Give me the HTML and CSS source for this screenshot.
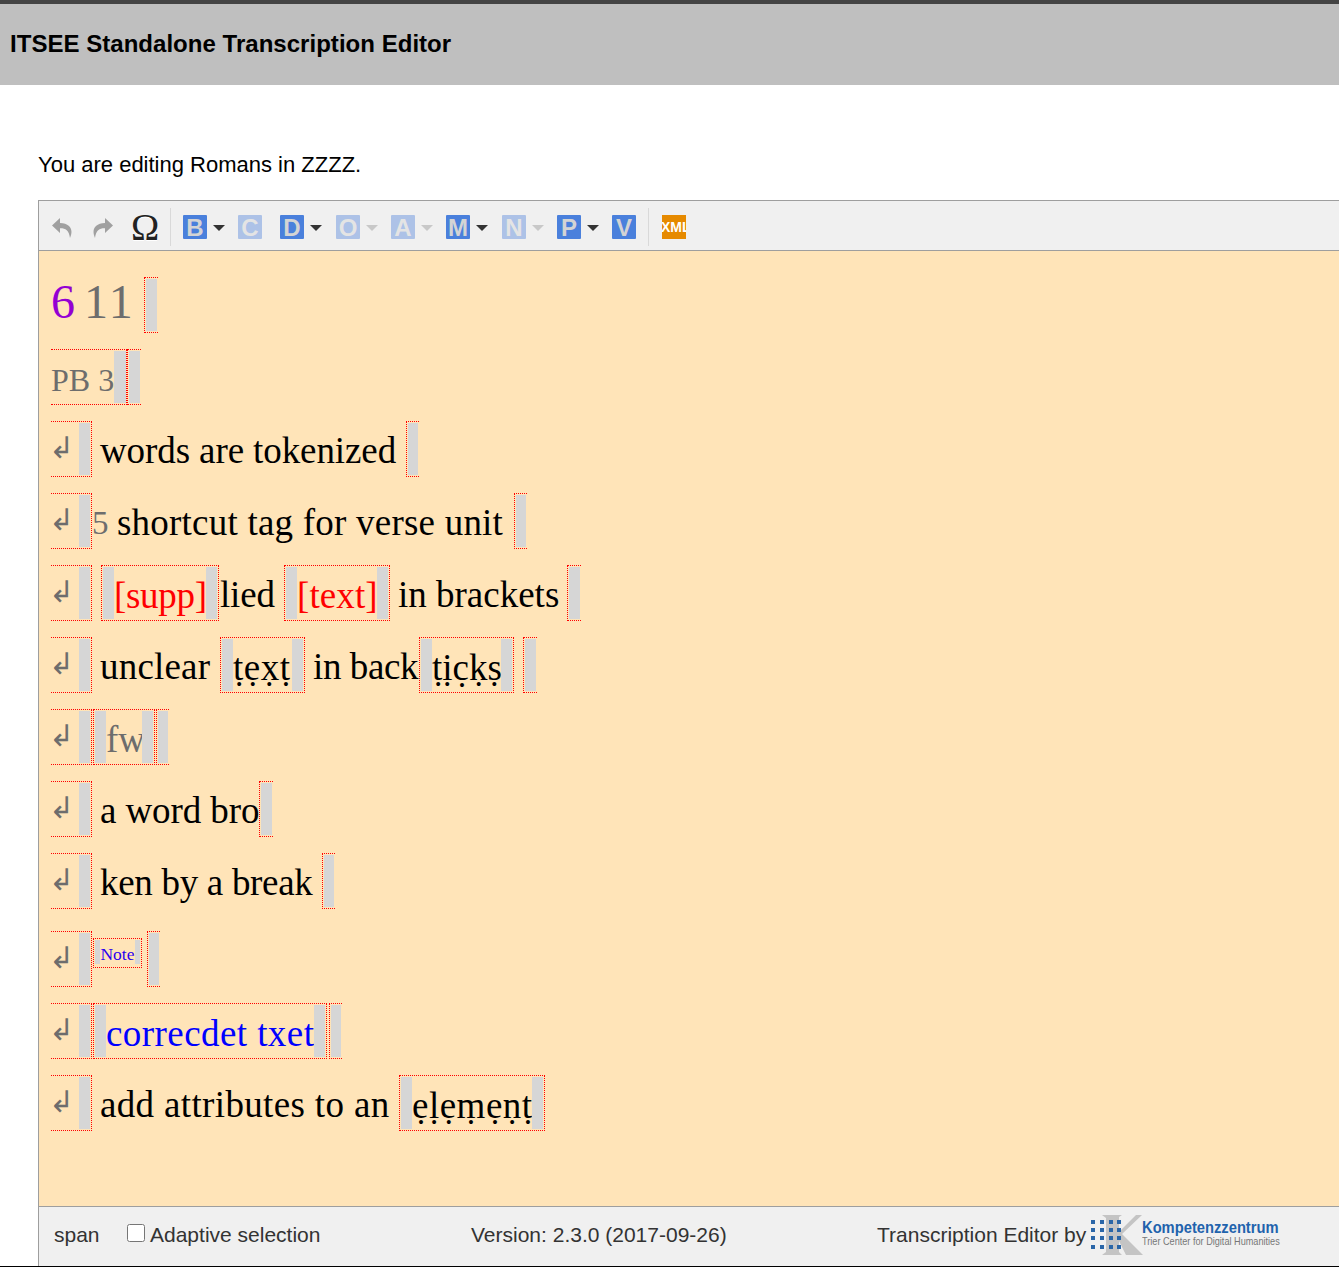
FILE: index.html
```html
<!DOCTYPE html>
<html lang="en">
<head>
<meta charset="utf-8">
<title>ITSEE Standalone Transcription Editor</title>
<link rel="stylesheet" href="styles.css">
</head>
<body>
<header class="page-header"><h1>ITSEE Standalone Transcription Editor</h1></header>
<p class="intro">You are editing Romans in ZZZZ.</p>
<section class="editor">
  <div class="toolbar">
    <svg class="history" viewBox="0 0 22 24"><path d="M9 3 L1 10.5 L9 18 L9 13.2 C14 13 18 14.8 19 23 C22.5 15 20 8.5 9 8 Z"/></svg>
    <svg class="history redo" viewBox="0 0 22 24"><path d="M13 3 L21 10.5 L13 18 L13 13.2 C8 13 4 14.8 3 23 C-.5 15 2 8.5 13 8 Z"/></svg>
    <span class="omega">Ω</span>
    <i class="sep"></i>
    <span class="btn">B</span><i class="caret"></i>
    <span class="btn off gap18">C</span>
    <span class="btn">D</span><i class="caret wide"></i>
    <span class="btn off">O</span><i class="caret off"></i>
    <span class="btn off">A</span><i class="caret off"></i>
    <span class="btn">M</span><i class="caret wide"></i>
    <span class="btn off">N</span><i class="caret off"></i>
    <span class="btn">P</span><i class="caret"></i>
    <span class="btn gap12">V</span>
    <i class="sep sep-xml"></i>
    <span class="xml"><span>XML</span></span>
  </div>
  <div class="content">
    <div class="row">
      <span class="title"><span class="purple">6</span> <span class="grey">11</span></span>
      <span class="seg tb l ml10"><i class="cap"></i></span>
    </div>
    <div class="row">
      <span class="seg tb r pb"><span class="grey small">PB 3</span><i class="cap"></i></span>
      <span class="seg tb l"><i class="cap"></i></span>
    </div>
    <div class="row">
      <span class="seg tb r brk"><span class="arrow">↲</span><i class="cap"></i></span>
      <span class="txt ml9 t-words">words are tokenized</span>
      <span class="seg tb l ml10 narrow"><i class="cap"></i></span>
    </div>
    <div class="row">
      <span class="seg tb r brk"><span class="arrow">↲</span><i class="cap"></i></span>
      <span class="txt grey t-five">5</span>
      <span class="txt ml9 t-shortcut">shortcut tag for verse unit</span>
      <span class="seg tb l ml10 narrow"><i class="cap"></i></span>
    </div>
    <div class="row">
      <span class="seg tb r brk"><span class="arrow">↲</span><i class="cap"></i></span>
      <span class="seg all ml9"><i class="cap"></i><span class="txt red t-supp">[supp]</span><i class="cap"></i></span>
      <span class="txt ml2 t-lied">lied</span>
      <span class="seg all ml10"><i class="cap"></i><span class="txt red t-text">[text]</span><i class="cap"></i></span>
      <span class="txt ml8 t-brackets">in brackets</span>
      <span class="seg tb l ml9"><i class="cap"></i></span>
    </div>
    <div class="row">
      <span class="seg tb r brk"><span class="arrow">↲</span><i class="cap"></i></span>
      <span class="txt ml9 t-unclear">unclear</span>
      <span class="seg all ml9"><i class="cap"></i><span class="txt t-dot1">ṭẹx̣ṭ</span><i class="cap"></i></span>
      <span class="txt ml9 t-back">in back</span>
      <span class="seg all ml1"><i class="cap"></i><span class="txt t-dot2">ṭịc̣ḳṣ</span><i class="cap"></i></span>
      <span class="seg tb l ml9"><i class="cap"></i></span>
    </div>
    <div class="row">
      <span class="seg tb r brk"><span class="arrow">↲</span><i class="cap"></i></span>
      <span class="seg tb r l ml1"><i class="cap"></i><span class="txt grey t-fw">fw</span><i class="cap"></i></span>
      <span class="seg tb l ml1 narrow"><i class="cap"></i></span>
    </div>
    <div class="row">
      <span class="seg tb r brk"><span class="arrow">↲</span><i class="cap"></i></span>
      <span class="txt ml9 t-bro">a word bro</span>
      <span class="seg tb l ml1"><i class="cap"></i></span>
    </div>
    <div class="row">
      <span class="seg tb r brk"><span class="arrow">↲</span><i class="cap"></i></span>
      <span class="txt ml9 t-ken">ken by a break</span>
      <span class="seg tb l ml9 narrow"><i class="cap"></i></span>
    </div>
    <div class="row note-row">
      <span class="seg tb r brk"><span class="arrow">↲</span><i class="cap"></i></span>
      <span class="seg all note ml1"><i class="cap-small"></i><span class="note-text">Note</span><i class="cap-small"></i></span>
      <span class="seg tb l ml5 narrow"><i class="cap"></i></span>
    </div>
    <div class="row">
      <span class="seg tb r brk"><span class="arrow">↲</span><i class="cap"></i></span>
      <span class="seg tb r l ml1"><i class="cap"></i><span class="txt blue t-corr">correcdet txet</span><i class="cap"></i></span>
      <span class="seg tb l ml2 narrow"><i class="cap"></i></span>
    </div>
    <div class="row">
      <span class="seg tb r brk"><span class="arrow">↲</span><i class="cap"></i></span>
      <span class="txt ml9 t-add">add attributes to an</span>
      <span class="seg all ml9"><i class="cap"></i><span class="txt t-element">ẹḷẹṃẹṇṭ</span><i class="cap"></i></span>
    </div>
  </div>
  <footer class="status">
    <span class="path">span</span>
    <label class="adaptive"><input type="checkbox">Adaptive selection</label>
    <span class="version">Version: 2.3.0 (2017-09-26)</span>
    <span class="credit">Transcription Editor by</span>
    <span class="logo">
      <svg class="logo-mark" viewBox="0 0 54 42">
        <path class="logo-k" d="M11 1 H31 L28 3 V18 L45 1 H51 L31 20 L52 41 H35 L28 27 V38 L31 41 H11 L15 38 V4 Z"/>
        <g class="logo-dots">
          <rect x="0" y="6" width="4" height="4"/><rect x="9" y="6" width="4" height="4"/><rect x="18" y="6" width="4" height="4"/><rect x="26" y="6" width="4" height="4"/>
          <rect x="0" y="14" width="4" height="4"/><rect x="9" y="14" width="4" height="4"/><rect x="18" y="14" width="4" height="4"/><rect x="26" y="14" width="4" height="4"/>
          <rect x="0" y="22" width="4" height="4"/><rect x="9" y="22" width="4" height="4"/><rect x="18" y="22" width="4" height="4"/><rect x="26" y="22" width="4" height="4"/>
          <rect x="0" y="31" width="4" height="4"/><rect x="9" y="31" width="4" height="4"/><rect x="18" y="31" width="4" height="4"/><rect x="26" y="31" width="4" height="4"/>
        </g>
      </svg>
      <span class="logo-text"><b>Kompetenzzentrum</b><small>Trier Center for Digital Humanities</small></span>
    </span>
  </footer>
</section>
</body>
</html>
```
FILE: styles.css
```css
html { margin: 0; padding: 0; height: 1267px; overflow: hidden; background: #fff; }
body { margin: 0; padding: 0; height: 1267px; box-sizing: border-box; overflow: hidden; border-bottom: 1px solid #000; font-family: "Liberation Sans", Arial, sans-serif; color: #000; }
.page-header { height: 81px; background: #bfbfbf; border-top: 4px solid #444; display: flex; align-items: center; }
.page-header h1 { margin: -2px 0 0 10px; font-size: 24px; font-weight: bold; line-height: 30px; letter-spacing: .03px; }
.intro { margin: 0; padding: 67px 0 0 38px; height: 48px; font-size: 22px; line-height: 26px; }
.editor { margin-left: 38px; width: 1400px; height: 1066px; box-sizing: border-box; border: 1px solid #9e9e9e; border-bottom: 0; border-right: 0; display: flex; flex-direction: column; }
.toolbar { height: 50px; box-sizing: border-box; flex: none; background: #f0f0f0; border-bottom: 1px solid #9e9e9e; display: flex; align-items: center; padding: 2px 0 0 12px; }
.history { width: 22px; height: 24px; fill: #a0a0a0; margin-right: 19px; }
.history.redo { margin-right: 17px; }
.omega { font-family: "Liberation Serif", serif; font-size: 38px; line-height: 34px; width: 28px; text-align: center; color: #222; text-shadow: 0 1px 0 #fff; }
.sep { width: 1px; height: 38px; background: #d9d9d9; margin: 0 12px 0 11px; }
.sep.sep-xml { margin: 0 13px 0 0; }
.btn { width: 24px; height: 24px; background: #4a80dc; color: #d4d4d4; font-weight: bold; font-size: 24px; line-height: 25px; text-align: center; margin-right: 18px; border-radius: 1px; }
.btn.gap12 { margin-right: 12px; }
.btn.off { opacity: .4; }
.btn + .caret { margin-left: -12px; }
.caret { width: 0; height: 0; border-left: 6px solid transparent; border-right: 6px solid transparent; border-top: 6px solid #333; margin-right: 13px; margin-top: 3px; }
.caret.wide { margin-right: 14px; }
.caret.off { border-top-color: #c8c8c8; }
.xml { width: 24px; height: 24px; background: #e68a00; color: #fff; font-weight: bold; font-size: 14px; line-height: 24px; overflow: hidden; white-space: nowrap; display: block; }
.xml span { margin-left: -1px; }
.content { flex: none; height: 955px; box-sizing: border-box; background: #ffe4b8; padding: 26px 0 0 12px; }
.row { display: flex; height: 56px; margin-bottom: 16px; align-items: stretch; white-space: nowrap; font-family: "Liberation Serif", serif; font-size: 37px; color: #000; }
.row.note-row { margin-top: 22px; }
.title { font-size: 48px; line-height: 50px; width: 83px; word-spacing: -3px; }
.title .grey { letter-spacing: 2.5px; }
.purple { color: #9400d3; }
.grey { color: #6d6d6d; }
.small { font-size: 32px; line-height: 61px; }
.seg { display: flex; align-items: stretch; box-sizing: border-box; flex: none; }
.seg.all { border: 1px dotted #f00; }
.seg.tb { border-top: 1px dotted #f00; border-bottom: 1px dotted #f00; }
.seg.r { border-right: 1px dotted #f00; }
.seg.l { border-left: 1px dotted #f00; }
.seg.brk { width: 41px; justify-content: flex-end; position: relative; }
.seg.pb { width: 76px; justify-content: space-between; }
.seg.pb .cap { width: 12px; margin-right: 0; }
.seg.narrow .cap { width: 10px; }
.cap { display: block; width: 11px; background: #d6d6d6; margin: 1px 0; flex: none; }
.cap:first-child { margin-left: 1px; }
.cap:last-child { margin-right: 1px; }
.arrow { position: absolute; left: -2px; top: 8px; font-family: "DejaVu Sans", sans-serif; font-size: 30px; line-height: 36px; color: #6d6d6d; }
.txt { display: block; line-height: 60px; flex: none; }
.red { color: #f00; }
.blue { color: #00f; }
.t-words { width: 295px; letter-spacing: -.1px; text-indent: -1px; }
.t-five { width: 16px; font-size: 33px; }
.t-shortcut { width: 387px; letter-spacing: .22px; }
.t-supp { width: 92px; letter-spacing: -.3px; }
.t-lied { width: 53px; letter-spacing: -.2px; text-indent: -1px; }
.t-text { width: 80px; letter-spacing: .1px; }
.t-brackets { width: 160px; }
.t-unclear { width: 110px; letter-spacing: .2px; text-indent: -1px; }
.t-dot1 { width: 59px; letter-spacing: .5px; }
.t-back { width: 104px; letter-spacing: -.4px; text-indent: -1px; }
.t-dot2 { width: 69px; }
.t-fw { width: 36px; }
.t-bro { width: 157px; letter-spacing: -.1px; text-indent: -1px; }
.t-ken { width: 212px; letter-spacing: -.3px; text-indent: -1px; }
.t-corr { width: 208px; letter-spacing: .43px; }
.t-add { width: 289px; letter-spacing: .35px; text-indent: -1px; }
.t-element { width: 120px; letter-spacing: .5px; }
.ml1 { margin-left: 1px; } .ml2 { margin-left: 2px; } .ml5 { margin-left: 5px; } .ml8 { margin-left: 8px; } .ml9 { margin-left: 9px; } .ml10 { margin-left: 10px; }
.seg.note { height: 30px; margin-top: 7px; }
.cap-small { display: block; width: 5px; background: #d6d6d6; margin: 1px 0 3px; flex: none; }
.cap-small:first-child { margin-left: 1px; }
.cap-small:last-child { margin-right: 1px; }
.note-text { font-size: 17.5px; line-height: 31px; color: #2a00f0; width: 35px; text-align: center; }
.status { flex: 1; min-height: 0; background: #f0f0f0; border-top: 1px solid #9e9e9e; display: flex; align-items: center; padding: 0 0 4px 15px; font-size: 21px; color: #333; }
.path { width: 73px; }
.adaptive { display: flex; align-items: center; width: 344px; }
.adaptive input { width: 18px; height: 18px; margin: 0 5px 4px 0; flex: none; }
.version { width: 406px; }
.credit { width: 214px; }
.logo { display: flex; align-items: center; margin-left: 0; }
.logo-mark { width: 54px; height: 42px; margin-top: 0; flex: none; }
.logo-k { fill: #c4c4c4; }
.logo-dots { fill: #2a66a8; }
.logo-text { display: flex; flex-direction: column; margin-left: -3px; margin-top: -4px; white-space: nowrap; width: 200px; }
.logo-text b { display: block; font-size: 16px; line-height: 17px; color: #1f63ad; transform: scaleX(.92); transform-origin: left; }
.logo-text small { display: block; font-size: 10.5px; line-height: 11px; color: #777; transform: scaleX(.87); transform-origin: left; }
```
